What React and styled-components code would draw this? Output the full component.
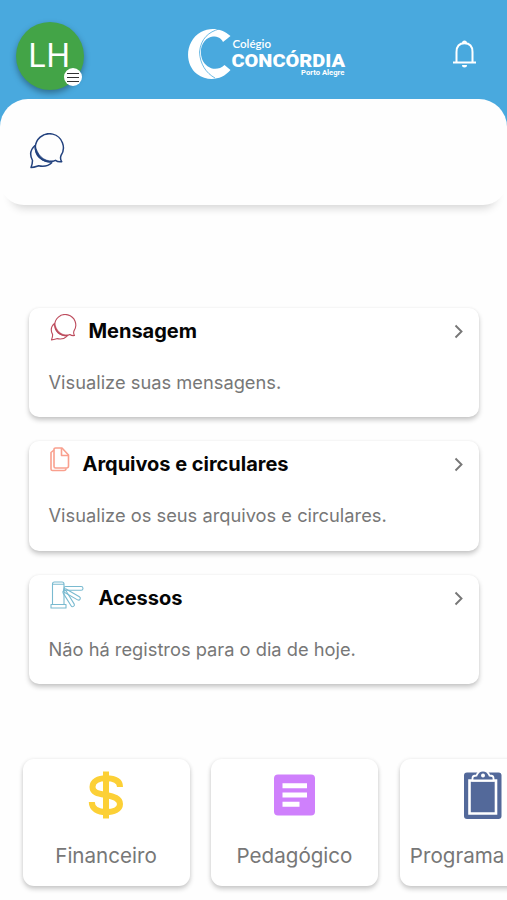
import React from 'react'
import styled, { createGlobalStyle } from 'styled-components'

const GlobalStyle = createGlobalStyle`
  * {
    box-sizing: border-box;
  }

  body {
    margin: 0;
    background: #fefefe;
    font-family: Inter, Roboto, "Liberation Sans", sans-serif;
  }
`

const Screen = styled.div`
  height: 900px;
  overflow: hidden;
  background: #fefefe;
`

const Header = styled.header`
  display: flex;
  align-items: flex-start;
  justify-content: space-between;
  height: 127px;
  padding: 22px 30px 0 16px;
  background: #49a9de;
`

const Avatar = styled.div`
  position: relative;
  width: 68px;
  height: 68px;
  border-radius: 50%;
  background: #43a447;
  box-shadow: 0 3px 6px rgba(0, 0, 0, .35);
  color: #fff;
  font-family: Inter, sans-serif;
  font-size: 32px;
  letter-spacing: -.3px;
  line-height: 68px;
  text-align: center;
  text-indent: -2px;
`

const MenuBadge = styled.span`
  position: absolute;
  right: 2px;
  bottom: 4px;
  display: flex;
  flex-direction: column;
  align-items: center;
  justify-content: center;
  gap: 3px;
  width: 18px;
  height: 18px;
  border-radius: 50%;
  background: #fff;
`

const BadgeLine = styled.i`
  width: 12px;
  height: 1px;
  background: #333;
`

const LogoSvg = styled.svg`
  width: 160px;
  height: 54px;
  margin: 6px 0 0;
`

const BellButton = styled.button`
  width: 26px;
  height: 30px;
  margin-top: 17px;
  padding: 0;
  border: 0;
  background: none;
`

const Sheet = styled.section`
  position: relative;
  height: 106px;
  margin-top: -28px;
  padding: 34px 29px;
  border-radius: 28px 28px 24px 24px;
  background: #fefefe;
  box-shadow: 0 14px 8px -11px rgba(0, 0, 0, .17);
`

const List = styled.main`
  display: flex;
  flex-direction: column;
  gap: 24px;
  margin: 102.5px 28px 0 29px;
`

const Card = styled.article`
  height: 109.5px;
  padding: 7px 14px 0 19.5px;
  border-radius: 10px;
  background: #fff;
  box-shadow: 0 3px 5px rgba(0, 0, 0, .22), 0 0 3px rgba(0, 0, 0, .05);
`

const CardHead = styled.div`
  display: flex;
  align-items: center;
  height: 32px;
`

const IconSlot = styled.span`
  display: flex;
  width: ${({ $width }) => $width}px;
  height: 28px;
  margin: -6px 0 0 1px;
`

const Title = styled.h2`
  flex: 1;
  margin: 0;
  color: #050505;
  font-size: 20px;
  font-weight: 700;
  letter-spacing: -.02px;
  line-height: 30px;
`

const Text = styled.p`
  margin: 23px 0 0;
  color: #777;
  font-size: 18.3px;
  line-height: 24px;
  white-space: nowrap;
`

const Tiles = styled.nav`
  display: flex;
  gap: 21.5px;
  padding: 74.5px 0 20px 22.5px;
  overflow: hidden;
`

const Tile = styled.div`
  display: flex;
  flex: none;
  flex-direction: column;
  align-items: center;
  width: 167px;
  height: 127px;
  padding-top: 9px;
  border-radius: 11px;
  background: #fff;
  box-shadow: 0 3px 5px rgba(0, 0, 0, .2), 0 0 4px rgba(0, 0, 0, .06);
`

const TileLabel = styled.span`
  margin-top: 21.5px;
  color: #777;
  font-size: 20.6px;
  line-height: 26px;
  white-space: nowrap;
`

const Logo = () => (
  <LogoSvg viewBox="0 0 160 54" fill="#fff">
    <path d="M42.500 8C34 0 22-1 13 4C-3 13-4 36 9 46C20 54 34 52 42.500 42L36.500 37C29 44 18 41 14 31C10 19 17 9 25 8.500C30 8.500 33 10 35 14Z" />
    <path d="M31 1C21 4 13 10 11.500 24C12 36 18 45 27 50" fill="none" stroke="#49a9de" strokeWidth=".8" />
    <text x="44.5" y="20" fontFamily="Lato, sans-serif" fontSize="11.5" fontWeight="600" textLength="38.5" lengthAdjust="spacingAndGlyphs">Colégio</text>
    <text x="43.5" y="38.5" fontFamily="Roboto, sans-serif" fontSize="19" fontWeight="900" textLength="113.5" lengthAdjust="spacingAndGlyphs">CONCÓRDIA</text>
    <text x="113" y="46.5" fontFamily="Roboto, sans-serif" fontSize="7.5" fontWeight="700" textLength="43.5" lengthAdjust="spacingAndGlyphs">Porto Alegre</text>
  </LogoSvg>
)

const BellIcon = () => (
  <svg width="26" height="30" viewBox="0 0 26 30" fill="none" stroke="#fff" strokeWidth="2">
    <path d="M2 23.5h23M5.500 23V13C5.500 7.500 8.500 4.200 13.500 4.200S21.500 7.500 21.500 13v10" />
    <path d="M11 4a2.500 2.500 0 0 1 5 0M11 26h5a2.500 2.500 0 0 1-5 0Z" fill="#fff" stroke="none" />
  </svg>
)

const ChatIcon = ({ size, color }) => (
  <svg width={size} height={size} viewBox="0 0 36 36" fill="none" stroke={color} strokeWidth="1.500" strokeLinejoin="round">
    <path d="M26.500 27.300A14 14 0 1 1 32 22.500C31.300 24.500 31.500 27 32.700 28.700C30.500 29 28 28.500 26.500 27.300Z" />
    <path d="M6 12.500C1 17 .5 22 3.500 27.500C3.500 30.500 2.800 32.500 2 34.500C5 34.500 7.500 33.500 9.500 32.800C15 34 20 32.500 23 29.500" />
    <path d="M6 12C5 20 11.500 30 23 29.300L24 28C14 28.500 8.500 22 6 12Z" fill={color} strokeWidth=".7" />
  </svg>
)

const FilesIcon = () => (
  <svg width="20" height="25" viewBox="0 0 20 25" fill="none" stroke="#f9a08e" strokeWidth="1.600" strokeLinejoin="round">
    <path d="M5.500 1H12l6.500 7v11a2 2 0 0 1-2 2H5.500A1.500 1.500 0 0 1 4 19.500v-17A1.500 1.500 0 0 1 5.500 1Z" />
    <path d="M11.500 1v7.500h7M4 3L1 5.500V22a1.500 1.500 0 0 0 1.500 1.500H14a2 2 0 0 0 2-2" />
  </svg>
)

const GateIcon = () => (
  <svg width="35" height="29" viewBox="0 0 35 29" fill="none" stroke="#79bad0" strokeWidth="1.100" strokeLinejoin="round">
    <path d="M2.500 23.500V3q0-2 2-2h7.500q2 0 2 2v20.500M1 23.500h15v3.500H1ZM3 3.200h10.500" />
    <rect x="14" y="5.500" width="19" height="3.800" rx="1.900" />
    <rect x="14" y="7" width="19" height="3.600" rx="1.800" transform="rotate(30 14 8)" />
    <rect x="14" y="8" width="18.500" height="3.600" rx="1.800" transform="rotate(58 14 9.500)" />
  </svg>
)

const Chevron = () => (
  <svg width="12" height="16" viewBox="0 0 12 16" fill="none" stroke="#777" strokeWidth="1.900">
    <path d="M2.500 2.500l6 6-6 6" />
  </svg>
)

const DollarIcon = () => (
  <svg width="50" height="54" viewBox="0 0 50 54" fill="none" stroke="#fcd036" strokeWidth="6">
    <path d="M25 3.500v47" />
    <path d="M39 19C39 12.500 33 10.300 25 10.300S11.500 13.300 11.500 19S17 25.500 25 27S39 30.500 39 36S33 44 25 44S10.800 41 10.800 34" />
  </svg>
)

const ArticleIcon = () => (
  <svg width="50" height="54" viewBox="0 0 50 54">
    <rect x="4" y="6.500" width="41" height="41" rx="4" fill="#cf80fc" />
    <path d="M12.500 17.700H37M12.500 27H37M12.500 36.300h17" stroke="#fff" strokeWidth="5" />
  </svg>
)

const ClipboardIcon = () => (
  <svg width="50" height="54" viewBox="0 0 50 54">
    <path d="M9 4.500H40.500q3 0 3 3V48q0 3-3 3H9q-3 0-3-3V7.500q0-3 3-3Z" fill="#53699a" />
    <path d="M11.500 12.500h26.500V45.500H11.500Z" fill="#53699a" stroke="#fff" strokeWidth="2.600" />
    <path d="M14.500 12.500V10q0-2.500 4-2.500C20 3.500 22 2.500 25 2.500s5 1 6.500 5q4 0 4 2.500v2.500Z" fill="#53699a" stroke="#fff" strokeWidth="1.800" />
    <circle cx="25" cy="7.500" r="2" fill="#fff" />
  </svg>
)

const cards = [
  { title: 'Mensagem', text: 'Visualize suas mensagens.', icon: <ChatIcon size={27} color="#bd4c5d" />, width: 39 },
  { title: 'Arquivos e circulares', text: 'Visualize os seus arquivos e circulares.', icon: <FilesIcon />, width: 33 },
  { title: 'Acessos', text: 'Não há registros para o dia de hoje.', icon: <GateIcon />, width: 49 }
]

const tiles = [
  { label: 'Financeiro', icon: <DollarIcon /> },
  { label: 'Pedagógico', icon: <ArticleIcon /> },
  { label: 'Programa Mais', icon: <ClipboardIcon /> }
]

const App = () => {
  return (
    <Screen>
      <GlobalStyle />
      <Header>
        <Avatar>
          LH
          <MenuBadge>
            <BadgeLine />
            <BadgeLine />
            <BadgeLine />
          </MenuBadge>
        </Avatar>
        <Logo />
        <BellButton>
          <BellIcon />
        </BellButton>
      </Header>
      <Sheet>
        <ChatIcon size={36} color="#23427e" />
      </Sheet>
      <List>
        {cards.map(({ title, text, icon, width }) => (
          <Card key={title}>
            <CardHead>
              <IconSlot $width={width}>{icon}</IconSlot>
              <Title>{title}</Title>
              <Chevron />
            </CardHead>
            <Text>{text}</Text>
          </Card>
        ))}
      </List>
      <Tiles>
        {tiles.map(({ label, icon }) => (
          <Tile key={label}>
            {icon}
            <TileLabel>{label}</TileLabel>
          </Tile>
        ))}
      </Tiles>
    </Screen>
  )
}

export default App
